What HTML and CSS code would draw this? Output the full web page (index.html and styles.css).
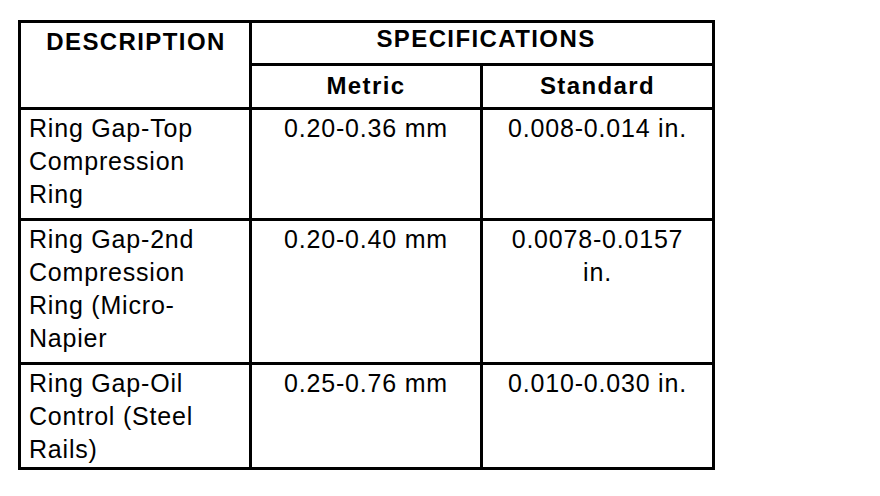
FILE: index.html
```html
<!DOCTYPE html>
<html>
<head>
<meta charset="utf-8">
<link rel="stylesheet" href="styles.css">
</head>
<body>
<div class="spec">
  <div class="cell head desc">DESCRIPTION</div>
  <div class="cell head group">SPECIFICATIONS</div>
  <div class="cell head sub sep">Metric</div>
  <div class="cell head sub">Standard</div>

  <div class="cell body name sep">Ring Gap-Top Compression Ring</div>
  <div class="cell body val sep">0.20-0.36 mm</div>
  <div class="cell body val">0.008-0.014 in.</div>

  <div class="cell body name sep">Ring Gap-2nd Compression Ring (Micro-Napier</div>
  <div class="cell body val sep">0.20-0.40 mm</div>
  <div class="cell body val">0.0078-0.0157 in.</div>

  <div class="cell body name sep last">Ring Gap-Oil Control (Steel Rails)</div>
  <div class="cell body val sep last">0.25-0.76 mm</div>
  <div class="cell body val last">0.010-0.030 in.</div>
</div>
</body>
</html>
```
FILE: styles.css
```css
html, body {
  margin: 0;
  padding: 0;
  background: #fff;
}
body {
  padding: 20px 0 0 18px;
  font-family: "Liberation Sans", Arial, sans-serif;
  color: #000;
}
.spec {
  box-sizing: border-box;
  width: 697px;
  border: 3px solid #000;
  display: grid;
  grid-template-columns: 231px 231px 229px;
}
.cell {
  box-sizing: border-box;
  border-bottom: 3px solid #000;
}
.sep {
  border-right: 3px solid #000;
}
.head {
  font-weight: bold;
  font-size: 24px;
  line-height: 28px;
  letter-spacing: 1.4px;
  text-align: center;
}
.desc {
  grid-row: span 2;
  border-right: 3px solid #000;
  padding-top: 4.5px;
  padding-left: 2px;
}
.group {
  grid-column: span 2;
  padding: 2px 0 10px 8px;
}
.sub {
  padding: 6px 0 7px;
}
.body {
  font-size: 25px;
  line-height: 33px;
  letter-spacing: 0.8px;
  padding: 2px 8px 7px;
}
.name {
  text-align: left;
}
.val {
  text-align: center;
  padding-left: 14px;
  padding-right: 14px;
}
.last {
  border-bottom: none;
  padding-bottom: 1px;
}
```
